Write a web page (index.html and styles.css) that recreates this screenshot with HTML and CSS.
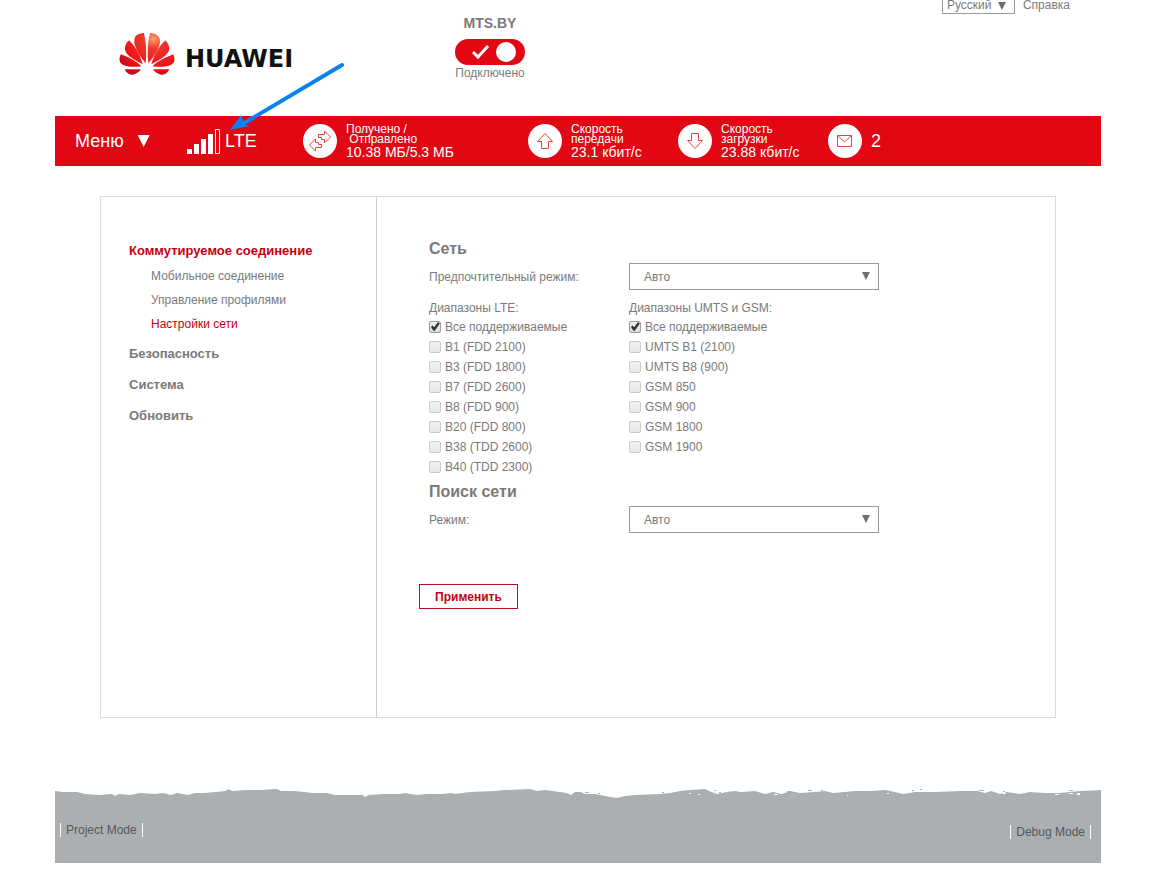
FILE: index.html
```html
<!DOCTYPE html>
<html lang="ru">
<head>
<meta charset="utf-8">
<title>Настройки сети</title>
<link rel="stylesheet" href="styles.css">
</head>
<body>
<div class="page">
  <header class="header">
    <div class="logo">
      <svg class="logo-mark" viewBox="58 66 168 132" aria-hidden="true">
        <defs>
          <radialGradient id="petal" gradientUnits="userSpaceOnUse" cx="162" cy="86" r="120">
            <stop offset="0" stop-color="#f7a070"/>
            <stop offset="0.25" stop-color="#f0382c"/>
            <stop offset="0.75" stop-color="#ee1018"/>
            <stop offset="1" stop-color="#c40c18"/>
          </radialGradient>
        </defs>
        <g fill="url(#petal)">
          <path d="M138 160C112 130 98 98 106 82C113 70 126 70 132 68C140 90 141 130 138 160Z"/>
          <path d="M129 163C98 148 72 130 76 112C79 98 86 94 88 91C110 112 122 138 129 163Z"/>
          <path d="M125 169C90 174 62 167 60 152C59 140 62 137 64 133C88 142 111 153 125 169Z"/>
          <path d="M124 178L75 178C80 190 90 196 100 194C112 191 119 186 124 178Z"/>
          <path d="M146 160C172 130 188 98 178 82C171 70 158 70 152 68C144 90 143 130 146 160Z"/>
          <path d="M155 163C186 148 212 130 209 112C205 98 199 94 197 91C175 112 162 138 155 163Z"/>
          <path d="M159 169C194 174 222 167 224 152C225 140 222 137 221 133C197 142 173 153 159 169Z"/>
          <path d="M160 178L209 178C204 190 194 196 184 194C172 191 165 186 160 178Z"/>
        </g>
      </svg>
      <span class="logo-text">HUAWEI</span>
    </div>
    <div class="connection">
      <strong class="operator">MTS.BY</strong>
      <button class="toggle" type="button" aria-label="Подключено">
        <svg class="toggle-check" viewBox="0 0 18 14" aria-hidden="true"><path d="M1 7L6 12L16 1"/></svg>
        <span class="toggle-knob"></span>
      </button>
      <span class="connection-state">Подключено</span>
    </div>
    <div class="tools">
      <div class="picker picker-language">
        <select aria-label="Язык"><option>Русский</option></select>
      </div>
      <a class="help" href="#">Справка</a>
    </div>
  </header>

  <div class="status-bar">
    <button class="menu" type="button">Меню <span class="menu-arrow"></span></button>
    <div class="signal">
      <svg class="signal-bars" viewBox="0 0 33 25" aria-hidden="true">
        <path fill="#fff" d="M0 20h5v5H0zM7 15h5v10H7zM14 10h5v15h-5zM21 5h5v20h-5z"/>
        <path fill="none" stroke="#fff" d="M28.500 .5h4v24h-4z"/>
      </svg>
      <span>LTE</span>
    </div>
    <div class="stat stat-wide">
      <svg class="stat-icon" viewBox="0 0 34 34" aria-hidden="true">
        <circle cx="17" cy="17" r="17"/>
        <path d="M15.500 10.500H21.500V7L27.500 13L21.500 19V15.500H18.500V13.500H15.500Z"/>
        <path d="M18.500 23.500H12.500V27L6.500 21L12.500 15V18.500H15.500V20.500H18.500Z"/>
      </svg>
      <div class="stat-text">
        <div class="stat-label">Получено /<br>&nbsp;Отправлено</div>
        <div class="stat-value">10.38 МБ/5.3 МБ</div>
      </div>
    </div>
    <div class="stat">
      <svg class="stat-icon" viewBox="0 0 34 34" aria-hidden="true">
        <circle cx="17" cy="17" r="17"/>
        <path d="M17 9.500L24.500 17.500H20.500V24.500H13.500V17.500H9.500Z"/>
      </svg>
      <div class="stat-text">
        <div class="stat-label">Скорость<br>передачи</div>
        <div class="stat-value">23.1 кбит/с</div>
      </div>
    </div>
    <div class="stat">
      <svg class="stat-icon" viewBox="0 0 34 34" aria-hidden="true">
        <circle cx="17" cy="17" r="17"/>
        <path d="M17 24.500L24.500 16.500H20.500V9.500H13.500V16.500H9.500Z"/>
      </svg>
      <div class="stat-text">
        <div class="stat-label">Скорость<br>загрузки</div>
        <div class="stat-value">23.88 кбит/с</div>
      </div>
    </div>
    <a class="messages" href="#">
      <svg class="stat-icon" viewBox="0 0 34 34" aria-hidden="true">
        <circle cx="17" cy="17" r="17"/>
        <path d="M9.500 11.500h14v11h-14zM9.500 11.500L16.500 18L23.500 11.500"/>
      </svg>
      <span>2</span>
    </a>
    <svg class="pointer" viewBox="0 0 120 72" aria-hidden="true">
      <path class="pointer-line" d="M114 5L18 62"/>
      <path class="pointer-head" d="M2 70L13 55L15 60L18 65L21 66Z"/>
    </svg>
  </div>

  <main class="panel">
    <nav class="sidebar">
      <a class="section section-active" href="#">Коммутируемое соединение</a>
      <div class="subsections">
        <a href="#">Мобильное соединение</a>
        <a href="#">Управление профилями</a>
        <a class="current" href="#">Настройки сети</a>
      </div>
      <a class="section" href="#">Безопасность</a>
      <a class="section" href="#">Система</a>
      <a class="section" href="#">Обновить</a>
    </nav>
    <form class="settings">
      <h2>Сеть</h2>
      <div class="field">
        <label for="preferred">Предпочтительный режим:</label>
        <div class="picker"><select id="preferred"><option>Авто</option></select></div>
      </div>
      <div class="bands">
        <fieldset>
          <legend>Диапазоны LTE:</legend>
          <label><input type="checkbox" checked>Все поддерживаемые</label>
          <label><input type="checkbox" disabled>B1 (FDD 2100)</label>
          <label><input type="checkbox" disabled>B3 (FDD 1800)</label>
          <label><input type="checkbox" disabled>B7 (FDD 2600)</label>
          <label><input type="checkbox" disabled>B8 (FDD 900)</label>
          <label><input type="checkbox" disabled>B20 (FDD 800)</label>
          <label><input type="checkbox" disabled>B38 (TDD 2600)</label>
          <label><input type="checkbox" disabled>B40 (TDD 2300)</label>
        </fieldset>
        <fieldset>
          <legend>Диапазоны UMTS и GSM:</legend>
          <label><input type="checkbox" checked>Все поддерживаемые</label>
          <label><input type="checkbox" disabled>UMTS B1 (2100)</label>
          <label><input type="checkbox" disabled>UMTS B8 (900)</label>
          <label><input type="checkbox" disabled>GSM 850</label>
          <label><input type="checkbox" disabled>GSM 900</label>
          <label><input type="checkbox" disabled>GSM 1800</label>
          <label><input type="checkbox" disabled>GSM 1900</label>
        </fieldset>
      </div>
      <h2>Поиск сети</h2>
      <div class="field">
        <label for="search">Режим:</label>
        <div class="picker"><select id="search"><option>Авто</option></select></div>
      </div>
      <button class="apply" type="button">Применить</button>
    </form>
  </main>

  <footer class="footer">
    <svg class="torn-edge" viewBox="0 0 1046 10" preserveAspectRatio="none" aria-hidden="true">
      <path fill="#acafb2" d="M0 2L8 3L22 3L30 5L45 6L57 5L60 7L64 5L75 6L85 4L100 5L108 4L116 6L122 4L133 6L140 4L150 4L160 3L171 2L172 0L178 2L190 1L205 1L222 0L226 2L238 2L250 3L258 4L272 4L280 6L295 6L308 6L310 8L314 6L328 5L345 5L350 4L362 6L372 5L388 5L396 4L400 5L415 3L440 2L450 1L475 0L482 2L490 1L505 3L512 4L516 6L520 3L526 3L530 5L540 5L550 7L562 9L570 7L580 6L605 5L615 4L625 2L635 1L650 0L654 2L662 5L672 3L680 2L686 3L700 2L710 5L718 3L727 5L735 2L745 4L760 3L770 2L778 4L790 3L800 2L815 2L830 1L840 3L848 5L860 3L880 3L905 2L922 2L930 4L936 2L945 5L952 3L965 5L975 3L990 4L1005 4L1015 3L1025 2L1046 1V10H0Z"/>
      <path fill="#acafb2" d="M530 3h4v1h-4zM543 4h2v1h-2zM607 3h2v1h-2zM659 1h2v1h-2zM664 3h2v1h-2zM732 2h3v1h-3zM753 1h4v1h-4zM766 1h2v1h-2zM857 1h2v1h-2zM865 0h2v1h-2zM924 1h5v1h-5zM948 2h2v1h-2zM1014 1h4v1h-4z"/>
      <path fill="#fff" d="M634 4h2v1h-2zM643 5h2v1h-2zM710 4h2v1h-2zM719 5h4v1h-4zM725 4h2v1h-2zM792 6h1v1h-1zM832 4h2v1h-2zM948 4h3v1h-3zM1000 5h4v1h-4zM1014 4h4v1h-4zM1022 4h3v2h-3z"/>
    </svg>
    <div class="footer-body">
      <a class="mode" href="#">Project Mode</a>
      <a class="mode mode-debug" href="#">Debug Mode</a>
    </div>
  </footer>
</div>
</body>
</html>
```
FILE: styles.css
```css
* {
  box-sizing: border-box;
}

body {
  margin: 0;
  background: #fff;
  color: #7a7a7a;
  font: 12px/16px "Liberation Sans", Arial, sans-serif;
}

a {
  color: inherit;
  text-decoration: none;
}

button,
select {
  font: inherit;
  color: inherit;
}

.page {
  padding: 0 65px 24px 55px;
}

/* Header */
.header {
  display: flex;
  align-items: flex-start;
  min-height: 116px;
}

.logo {
  display: flex;
  align-items: center;
  gap: 10px;
  width: 375px;
  padding: 32px 0 0 64px;
}

.logo-mark {
  width: 56px;
  height: 44px;
}

.logo-text {
  padding-top: 10px;
  color: #111;
  font: bold 24px/28px "DejaVu Sans", sans-serif;
}

.connection {
  display: flex;
  flex-direction: column;
  align-items: center;
  width: 120px;
  padding-top: 15px;
}

.operator {
  font-size: 14px;
}

.toggle {
  display: flex;
  align-items: center;
  justify-content: space-between;
  width: 70px;
  height: 26px;
  margin-top: 8px;
  padding: 0 9px 0 17px;
  border: 0;
  border-radius: 13px;
  background: #e30613;
}

.toggle-check {
  width: 18px;
  height: 14px;
  fill: none;
  stroke: #fff;
  stroke-width: 3;
}

.toggle-knob {
  width: 20px;
  height: 20px;
  border-radius: 50%;
  background: #fff;
}

.tools {
  display: flex;
  align-items: center;
  gap: 8px;
  margin: -6px 31px 0 auto;
}

.help {
  padding-top: 2px;
}

/* Drop-downs */
.picker {
  position: relative;
  width: 250px;
}

.picker select {
  display: block;
  width: 100%;
  height: 27px;
  padding: 0 14px;
  border: 1px solid #9a9a9a;
  border-radius: 0;
  background: #fff;
  appearance: none;
}

.picker::after {
  content: "";
  position: absolute;
  top: 9px;
  right: 9px;
  width: 8px;
  height: 8px;
  background: #6f6f6f;
  clip-path: polygon(0 0, 100% 0, 50% 100%);
  pointer-events: none;
}

.picker-language {
  width: 73px;
}

.picker-language select {
  height: 20px;
  padding: 1px 4px 0;
}

.picker-language::after {
  top: 8px;
}

/* Status bar */
.status-bar {
  position: relative;
  display: flex;
  align-items: center;
  height: 50px;
  padding-left: 20px;
  background: #e30613;
  color: #fff;
  white-space: nowrap;
}

.menu {
  display: flex;
  align-items: center;
  gap: 14px;
  width: 112px;
  padding: 0;
  border: 0;
  background: none;
  font-size: 18px;
}

.menu-arrow {
  width: 12px;
  height: 12px;
  background: #fff;
  clip-path: polygon(0 0, 100% 0, 50% 100%);
}

.signal {
  display: flex;
  align-items: center;
  gap: 5px;
  width: 116px;
  font-size: 18px;
}

.signal-bars {
  width: 33px;
  height: 25px;
}

.stat,
.messages {
  display: flex;
  align-items: center;
  gap: 9px;
}

.stat {
  width: 150px;
}

.stat-wide {
  width: 225px;
}

.stat-icon {
  width: 34px;
  height: 34px;
  fill: none;
  stroke: #e0483c;
}

.stat-icon circle {
  fill: #fff;
  stroke: none;
}

.stat-text {
  padding-top: 2px;
}

.stat-label {
  line-height: 10px;
}

.stat-value {
  font-size: 14px;
}

.messages {
  font-size: 18px;
}

.pointer {
  position: absolute;
  left: 173px;
  bottom: 34px;
  width: 120px;
  height: 72px;
}

.pointer-line {
  stroke: #0a80f5;
  stroke-width: 4;
  stroke-linecap: round;
}

.pointer-head {
  fill: #0a80f5;
}

/* Panel */
.panel {
  display: flex;
  min-height: 522px;
  margin: 30px 45px 0;
  border: 1px solid #ddd;
}

.sidebar {
  width: 276px;
  padding: 41px 28px;
  border-right: 1px solid #ccc;
}

.section {
  display: block;
  margin-bottom: 6px;
  font-size: 13px;
  font-weight: bold;
  line-height: 25px;
}

.section-active {
  margin-bottom: 1px;
  color: #c9000f;
}

.subsections {
  display: flex;
  flex-direction: column;
  margin-bottom: 5px;
  padding-left: 22px;
  line-height: 24px;
}

.current {
  color: #c9000f;
}

.settings {
  flex: 1;
  padding: 40px 52px;
}

h2 {
  margin: 0 0 2px;
  font-size: 16px;
  line-height: 24px;
}

.field {
  display: grid;
  grid-template-columns: 200px 1fr;
  align-items: center;
}

.bands {
  display: grid;
  grid-template-columns: 200px 1fr;
  margin: 10px 0 3px;
}

fieldset {
  min-width: 0;
  margin: 0;
  padding: 0;
  border: 0;
}

legend {
  margin-bottom: 1px;
  padding: 0;
}

fieldset label {
  display: flex;
  align-items: center;
  gap: 4px;
  line-height: 20px;
}

input {
  width: 12px;
  height: 12px;
  margin: 0 0 1px;
  border: 1px solid #ccc;
  border-radius: 2px;
  background: linear-gradient(#f2f2f2, #e6e6e6);
  appearance: none;
}

input:checked {
  border-color: #999;
  background: linear-gradient(#eee, #ddd);
}

input:checked::before {
  content: "";
  display: block;
  width: 10px;
  height: 10px;
  background: #333;
  clip-path: polygon(10% 55%, 25% 40%, 42% 58%, 80% 5%, 98% 20%, 48% 92%, 34% 92%);
}

.apply {
  width: 99px;
  height: 25px;
  margin: 51px 0 0 -10px;
  padding: 0;
  border: 1px solid #b8101f;
  background: #fff;
  color: #c9000f;
  font-weight: bold;
}

/* Footer */
.footer {
  margin-top: 71px;
}

.torn-edge {
  display: block;
  width: 100%;
  height: 10px;
}

.footer-body {
  display: flex;
  justify-content: space-between;
  align-items: flex-start;
  height: 64px;
  padding: 24px 10px 0 5px;
  background: #acafb2;
  color: #55585b;
}

.mode {
  padding: 0 5px;
  border: solid #fff;
  border-width: 0 1px;
  line-height: 14px;
}

.mode-debug {
  margin-top: 2px;
}
```
